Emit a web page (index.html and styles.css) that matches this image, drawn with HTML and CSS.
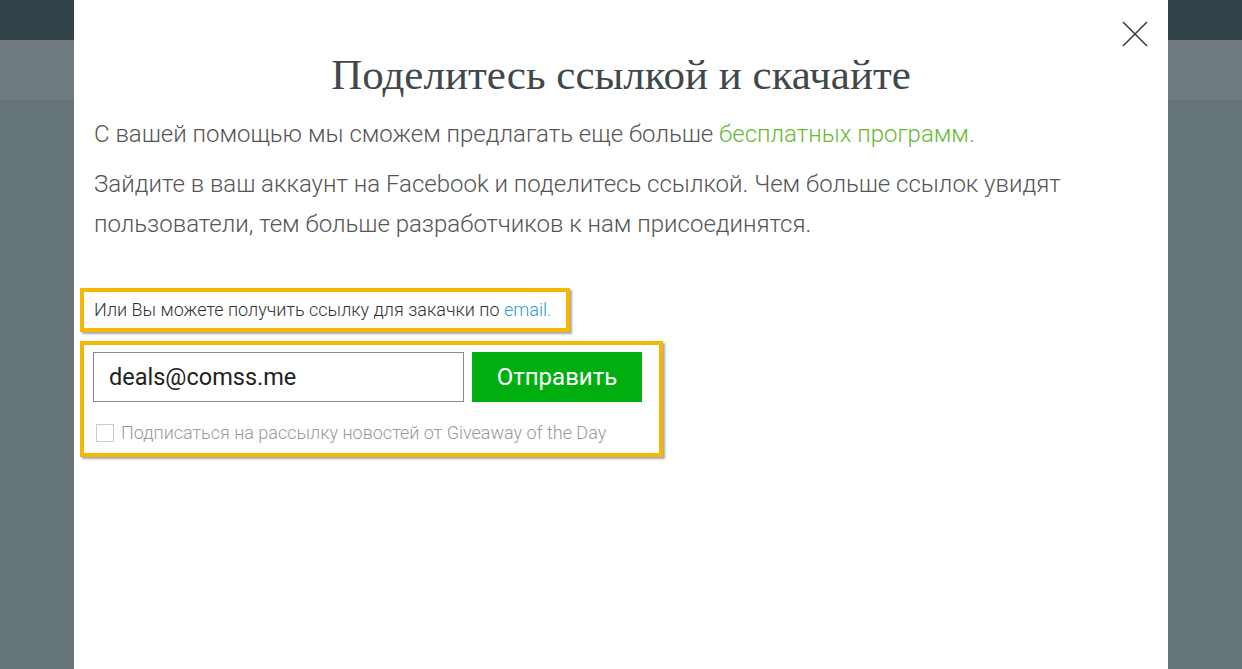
FILE: index.html
```html
<!DOCTYPE html>
<html>
<head lang="ru">
    <meta charset="UTF-8">
    <title>Поделитесь ссылкой и скачайте</title>
    <link rel="stylesheet" href="styles.css">
</head>
<body>
<div class="page-bg">
    <div class="bg-top"></div>
    <div class="bg-band"></div>
    <div class="bg-rest"></div>
</div>

<div class="share-modal">
    <a href="javascript:void(0);" class="close-modal" title="Закрыть">
        <svg width="26" height="26" viewBox="0 0 26 26"><path d="M1 1L25 25M25 1L1 25" stroke="#3a3f42" stroke-width="1.6" fill="none"/></svg>
    </a>
    <h1 class="share-title">Поделитесь ссылкой и скачайте</h1>
    <p class="share-text">С вашей помощью мы сможем предлагать еще больше <a href="javascript:void(0);" class="green-link">бесплатных программ.</a></p>
    <p class="share-text">Зайдите в ваш аккаунт на Facebook и поделитесь ссылкой. Чем больше ссылок увидят пользователи, тем больше разработчиков к нам присоединятся.</p>

    <div class="mark-box email-note">Или Вы можете получить ссылку для закачки по <a href="javascript:void(0);" class="blue-link">email.</a></div>

    <div class="mark-box email-form">
        <div class="form-row">
            <input type="text" class="email-input" value="deals@comss.me">
            <a href="javascript:void(0);" class="send-btn">Отправить</a>
        </div>
        <label class="subscribe">
            <span class="check"></span>
            Подписаться на рассылку новостей от Giveaway of the Day
        </label>
    </div>
</div>
</body>
</html>
```

FILE: styles.css
```css
html, body {
    margin: 0;
    padding: 0;
    height: 100%;
    overflow: hidden;
}

body {
    font-family: Roboto, "Liberation Sans", sans-serif;
    background: #667578;
}

h1, p, div, span, a, label {
    margin: 0;
    padding: 0;
}

a {
    text-decoration: none;
}

.bg-top {
    height: 40px;
    background: #33434a;
}

.bg-band {
    height: 60px;
    background: #6e7a7e;
}

.bg-rest {
    height: 569px;
    background: #667578;
}

.share-modal {
    position: absolute;
    top: 0;
    left: 74px;
    width: 1094px;
    height: 669px;
    background: #ffffff;
    box-sizing: border-box;
    padding: 50px 20px 0 6px;
}

.close-modal {
    position: absolute;
    top: 21px;
    right: 20px;
    display: block;
    width: 26px;
    height: 26px;
}

.close-modal svg {
    display: block;
}

.share-title {
    font-family: "Liberation Serif", "DejaVu Serif", serif;
    font-weight: normal;
    font-size: 43px;
    line-height: 50px;
    color: #3f484b;
    text-align: center;
    padding-left: 14px;
    margin-bottom: 14px;
}

.share-text {
    font-weight: 300;
    font-size: 24px;
    line-height: 40px;
    color: #555555;
    padding-left: 14px;
    margin-bottom: 10px;
    max-width: 1000px;
}

.green-link {
    color: #66bb33;
}

.blue-link {
    color: #2d9ad6;
}

.mark-box {
    display: table;
    border: 4px solid #f5b800;
    box-shadow: 2px 2px 2px rgba(0, 0, 0, 0.35);
}

.email-note {
    margin-top: 44px;
    padding: 0 15px 0 10px;
    height: 36px;
    line-height: 36px;
    font-weight: 300;
    font-size: 18px;
    color: #333333;
}

.email-form {
    margin-top: 9px;
    padding: 7px 17px 10px 9px;
}

.form-row {
    display: flex;
    gap: 8px;
}

.email-input {
    width: 371px;
    height: 50px;
    box-sizing: border-box;
    border: 1px solid #8a8a8a;
    padding: 0 15px;
    font-family: Roboto, "Liberation Sans", sans-serif;
    font-size: 23.5px;
    color: #222222;
    outline: none;
}

.send-btn {
    display: block;
    width: 170px;
    height: 50px;
    line-height: 50px;
    text-align: center;
    background: #00af0f;
    color: #ffffff;
    font-size: 24px;
}

.subscribe {
    display: flex;
    align-items: center;
    gap: 7px;
    margin-top: 20px;
    padding-left: 3px;
    font-weight: 300;
    font-size: 18px;
    color: #9a9a9a;
}

.check {
    display: block;
    width: 16px;
    height: 16px;
    border: 1px solid #cccccc;
}
```
